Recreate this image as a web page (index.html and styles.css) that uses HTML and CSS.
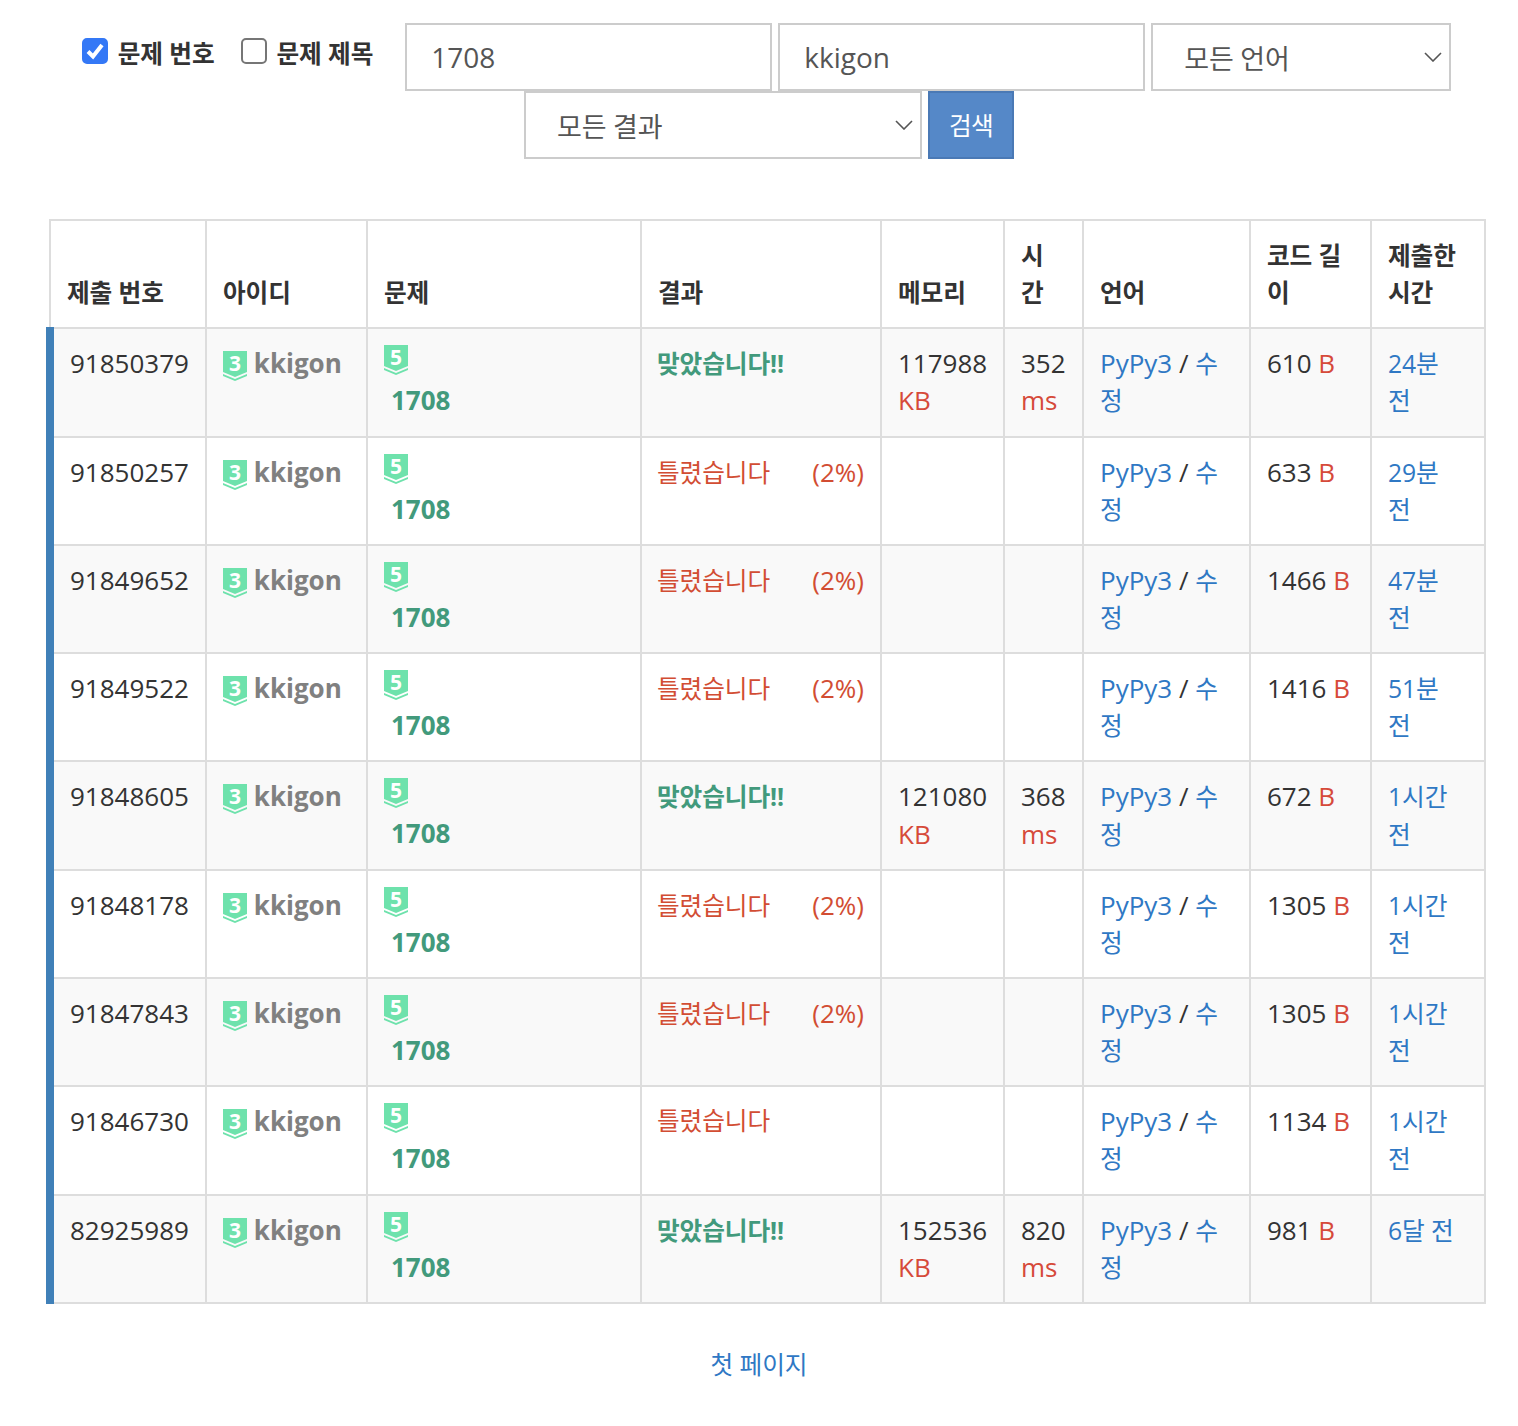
FILE: index.html
```html
<!DOCTYPE html>
<html lang="ko">
<head>
<meta charset="utf-8">
<title>채점 현황</title>
<link rel="stylesheet" href="styles.css">
</head>
<body>
<form class="filter">
  <div class="checks">
    <label class="check"><input type="checkbox" checked><span class="ko">문제 번호</span></label>
    <label class="check"><input type="checkbox"><span class="ko">문제 제목</span></label>
  </div>
  <input class="field field-wide" type="text" value="1708">
  <input class="field field-wide" type="text" value="kkigon">
  <select class="field pick pick-lang"><option>모든 언어</option></select>
  <select class="field pick pick-result"><option>모든 결과</option></select>
  <button class="search" type="button"><span class="ko">검색</span></button>
</form>
<table class="status">
  <thead>
    <tr>
      <th class="c1"><span class="ko">제출 번호</span></th><th class="c2"><span class="ko">아이디</span></th><th class="c3"><span class="ko">문제</span></th><th class="c4"><span class="ko">결과</span></th><th class="c5"><span class="ko">메모리</span></th><th class="c6"><span class="ko">시간</span></th><th class="c7"><span class="ko">언어</span></th><th class="c8"><span class="ko">코드 길이</span></th><th class="c9"><span class="ko">제출한 시간</span></th>
    </tr>
  </thead>
  <tbody>
    <tr>
      <td>91850379</td>
      <td><a class="user"><svg class="tier" viewBox="0 0 24 30"><path d="M0 0H24V21L12 26L0 21Z"/><path d="M0 23L12 28L24 23V25L12 30L0 25Z"/><text x="12" y="20">3</text></svg> kkigon</a></td>
      <td><svg class="tier" viewBox="0 0 24 30"><path d="M0 0H24V21L12 26L0 21Z"/><path d="M0 23L12 28L24 23V25L12 30L0 25Z"/><text x="12" y="20">5</text></svg><a class="prob">1708</a></td>
      <td><span class="ac ko">맞았습니다!!</span></td>
      <td>117988 <span class="unit">KB</span></td>
      <td>352 <span class="unit">ms</span></td>
      <td><a class="link">PyPy3</a> / <a class="link ko">수정</a></td>
      <td>610 <span class="unit">B</span></td>
      <td><a class="link ko">24분 전</a></td>
    </tr>
    <tr>
      <td>91850257</td>
      <td><a class="user"><svg class="tier" viewBox="0 0 24 30"><path d="M0 0H24V21L12 26L0 21Z"/><path d="M0 23L12 28L24 23V25L12 30L0 25Z"/><text x="12" y="20">3</text></svg> kkigon</a></td>
      <td><svg class="tier" viewBox="0 0 24 30"><path d="M0 0H24V21L12 26L0 21Z"/><path d="M0 23L12 28L24 23V25L12 30L0 25Z"/><text x="12" y="20">5</text></svg><a class="prob">1708</a></td>
      <td><div class="wa"><span class="ko">틀렸습니다</span><span>(2%)</span></div></td>
      <td></td>
      <td></td>
      <td><a class="link">PyPy3</a> / <a class="link ko">수정</a></td>
      <td>633 <span class="unit">B</span></td>
      <td><a class="link ko">29분 전</a></td>
    </tr>
    <tr>
      <td>91849652</td>
      <td><a class="user"><svg class="tier" viewBox="0 0 24 30"><path d="M0 0H24V21L12 26L0 21Z"/><path d="M0 23L12 28L24 23V25L12 30L0 25Z"/><text x="12" y="20">3</text></svg> kkigon</a></td>
      <td><svg class="tier" viewBox="0 0 24 30"><path d="M0 0H24V21L12 26L0 21Z"/><path d="M0 23L12 28L24 23V25L12 30L0 25Z"/><text x="12" y="20">5</text></svg><a class="prob">1708</a></td>
      <td><div class="wa"><span class="ko">틀렸습니다</span><span>(2%)</span></div></td>
      <td></td>
      <td></td>
      <td><a class="link">PyPy3</a> / <a class="link ko">수정</a></td>
      <td>1466 <span class="unit">B</span></td>
      <td><a class="link ko">47분 전</a></td>
    </tr>
    <tr>
      <td>91849522</td>
      <td><a class="user"><svg class="tier" viewBox="0 0 24 30"><path d="M0 0H24V21L12 26L0 21Z"/><path d="M0 23L12 28L24 23V25L12 30L0 25Z"/><text x="12" y="20">3</text></svg> kkigon</a></td>
      <td><svg class="tier" viewBox="0 0 24 30"><path d="M0 0H24V21L12 26L0 21Z"/><path d="M0 23L12 28L24 23V25L12 30L0 25Z"/><text x="12" y="20">5</text></svg><a class="prob">1708</a></td>
      <td><div class="wa"><span class="ko">틀렸습니다</span><span>(2%)</span></div></td>
      <td></td>
      <td></td>
      <td><a class="link">PyPy3</a> / <a class="link ko">수정</a></td>
      <td>1416 <span class="unit">B</span></td>
      <td><a class="link ko">51분 전</a></td>
    </tr>
    <tr>
      <td>91848605</td>
      <td><a class="user"><svg class="tier" viewBox="0 0 24 30"><path d="M0 0H24V21L12 26L0 21Z"/><path d="M0 23L12 28L24 23V25L12 30L0 25Z"/><text x="12" y="20">3</text></svg> kkigon</a></td>
      <td><svg class="tier" viewBox="0 0 24 30"><path d="M0 0H24V21L12 26L0 21Z"/><path d="M0 23L12 28L24 23V25L12 30L0 25Z"/><text x="12" y="20">5</text></svg><a class="prob">1708</a></td>
      <td><span class="ac ko">맞았습니다!!</span></td>
      <td>121080 <span class="unit">KB</span></td>
      <td>368 <span class="unit">ms</span></td>
      <td><a class="link">PyPy3</a> / <a class="link ko">수정</a></td>
      <td>672 <span class="unit">B</span></td>
      <td><a class="link ko">1시간 전</a></td>
    </tr>
    <tr>
      <td>91848178</td>
      <td><a class="user"><svg class="tier" viewBox="0 0 24 30"><path d="M0 0H24V21L12 26L0 21Z"/><path d="M0 23L12 28L24 23V25L12 30L0 25Z"/><text x="12" y="20">3</text></svg> kkigon</a></td>
      <td><svg class="tier" viewBox="0 0 24 30"><path d="M0 0H24V21L12 26L0 21Z"/><path d="M0 23L12 28L24 23V25L12 30L0 25Z"/><text x="12" y="20">5</text></svg><a class="prob">1708</a></td>
      <td><div class="wa"><span class="ko">틀렸습니다</span><span>(2%)</span></div></td>
      <td></td>
      <td></td>
      <td><a class="link">PyPy3</a> / <a class="link ko">수정</a></td>
      <td>1305 <span class="unit">B</span></td>
      <td><a class="link ko">1시간 전</a></td>
    </tr>
    <tr>
      <td>91847843</td>
      <td><a class="user"><svg class="tier" viewBox="0 0 24 30"><path d="M0 0H24V21L12 26L0 21Z"/><path d="M0 23L12 28L24 23V25L12 30L0 25Z"/><text x="12" y="20">3</text></svg> kkigon</a></td>
      <td><svg class="tier" viewBox="0 0 24 30"><path d="M0 0H24V21L12 26L0 21Z"/><path d="M0 23L12 28L24 23V25L12 30L0 25Z"/><text x="12" y="20">5</text></svg><a class="prob">1708</a></td>
      <td><div class="wa"><span class="ko">틀렸습니다</span><span>(2%)</span></div></td>
      <td></td>
      <td></td>
      <td><a class="link">PyPy3</a> / <a class="link ko">수정</a></td>
      <td>1305 <span class="unit">B</span></td>
      <td><a class="link ko">1시간 전</a></td>
    </tr>
    <tr>
      <td>91846730</td>
      <td><a class="user"><svg class="tier" viewBox="0 0 24 30"><path d="M0 0H24V21L12 26L0 21Z"/><path d="M0 23L12 28L24 23V25L12 30L0 25Z"/><text x="12" y="20">3</text></svg> kkigon</a></td>
      <td><svg class="tier" viewBox="0 0 24 30"><path d="M0 0H24V21L12 26L0 21Z"/><path d="M0 23L12 28L24 23V25L12 30L0 25Z"/><text x="12" y="20">5</text></svg><a class="prob">1708</a></td>
      <td><div class="wa"><span class="ko">틀렸습니다</span></div></td>
      <td></td>
      <td></td>
      <td><a class="link">PyPy3</a> / <a class="link ko">수정</a></td>
      <td>1134 <span class="unit">B</span></td>
      <td><a class="link ko">1시간 전</a></td>
    </tr>
    <tr>
      <td>82925989</td>
      <td><a class="user"><svg class="tier" viewBox="0 0 24 30"><path d="M0 0H24V21L12 26L0 21Z"/><path d="M0 23L12 28L24 23V25L12 30L0 25Z"/><text x="12" y="20">3</text></svg> kkigon</a></td>
      <td><svg class="tier" viewBox="0 0 24 30"><path d="M0 0H24V21L12 26L0 21Z"/><path d="M0 23L12 28L24 23V25L12 30L0 25Z"/><text x="12" y="20">5</text></svg><a class="prob">1708</a></td>
      <td><span class="ac ko">맞았습니다!!</span></td>
      <td>152536 <span class="unit">KB</span></td>
      <td>820 <span class="unit">ms</span></td>
      <td><a class="link">PyPy3</a> / <a class="link ko">수정</a></td>
      <td>981 <span class="unit">B</span></td>
      <td><a class="link ko">6달 전</a></td>
    </tr>
  </tbody>
</table>
<nav class="pager"><a class="link ko">첫 페이지</a></nav>
</body>
</html>
```
FILE: styles.css
```css
* { box-sizing: border-box; }
html, body { margin: 0; background: #fff; }
body {
  font-family: "Open Sans", "Noto Sans CJK KR", sans-serif;
  font-size: 26px;
  line-height: 1.42857;
  color: #333;
  padding: 23px 32px 0 46px;
}
.ko { font-size: 0.95em; letter-spacing: -0.1px; }
.filter {
  display: flex;
  flex-wrap: wrap;
  justify-content: center;
  column-gap: 6px;
  margin: 0 -6px 60px 0;
}
.checks { display: flex; gap: 26px; padding: 13px 26px 0 0; height: 68px; }
.check { display: flex; align-items: flex-start; gap: 10px; font-weight: 700; }
.check input {
  appearance: none;
  width: 26px;
  height: 26px;
  margin: 2px 0 0;
  border: 2px solid #767676;
  border-radius: 5px;
  background: #fff;
}
.check input:checked {
  border-color: #3478f6;
  background: #3478f6 url("data:image/svg+xml,%3Csvg xmlns='http://www.w3.org/2000/svg' viewBox='0 0 22 22'%3E%3Cpath d='M4 11.5L9 16.5L18 5' fill='none' stroke='%23fff' stroke-width='4'/%3E%3C/svg%3E") center / 100% no-repeat;
}
.field {
  height: 68px;
  border: 2px solid #ccc;
  border-radius: 0;
  background: #fff;
  color: #555;
  font: 28px/1.4 "Open Sans", "Noto Sans CJK KR", sans-serif;
  padding: 0 24px;
  outline: none;
}
.field-wide { width: 367px; }
.pick {
  appearance: none;
  padding: 4px 24px 0 31px;
  letter-spacing: -0.2px;
  font-size: 27px;
  background: #fff url("data:image/svg+xml,%3Csvg xmlns='http://www.w3.org/2000/svg' viewBox='0 0 18 10'%3E%3Cpath d='M1 1L9 9L17 1' fill='none' stroke='%23555' stroke-width='1.6'/%3E%3C/svg%3E") right 7px center / 18px 10px no-repeat;
}
.pick-lang { width: 300px; margin-right: 5px; }
.pick-result { width: 398px; }
.search {
  width: 86px;
  height: 68px;
  border: 2px solid #4a79b5;
  background: #5588c8;
  color: #fff;
  font: 26px/1.4 "Open Sans", "Noto Sans CJK KR", sans-serif;
  padding: 0;
}
.search .ko { letter-spacing: -0.6px; }
.status {
  border-collapse: collapse;
  table-layout: fixed;
  width: 1435px;
}
.c1 { width: 156px; } .c2 { width: 161px; } .c3 { width: 274px; }
.c4 { width: 240px; } .c5 { width: 123px; } .c6 { width: 79px; }
.c7 { width: 167px; } .c8 { width: 121px; } .c9 { width: 114px; }
th, td {
  border: 2px solid #ddd;
  padding: 16px;
  text-align: left;
  vertical-align: top;
  font-weight: 400;
}
th { font-weight: 700; vertical-align: bottom; }
th.c6 { padding-right: 20px; }
td:last-child { padding-right: 24px; }
tbody tr:nth-child(odd) { background: #f9f9f9; }
tbody td:first-child { border-left: 8px solid #4080b8; }
.user { color: #808080; font-weight: 700; }
.tier { width: 24px; height: 30px; vertical-align: -8px; overflow: visible; }
.tier path { fill: #6ee2ac; }
.tier text {
  fill: #fff;
  font: 700 21px/1 "Open Sans", sans-serif;
  text-anchor: middle;
}
td > .tier { display: block; margin-bottom: 7px; }
.prob { display: block; color: #429a7c; font-weight: 700; padding-left: 7px; }
.ac { display: inline-block; margin-left: -1px; color: #429a7c; font-weight: 700; }
.wa { display: flex; align-items: baseline; justify-content: space-between; color: #d24d33; }
.wa .ko { margin-left: -1px; }
.unit { color: #d64a3a; }
.link { color: #2f78c4; }
.pager { text-align: center; margin: 42px 14px 0 0; }
```
